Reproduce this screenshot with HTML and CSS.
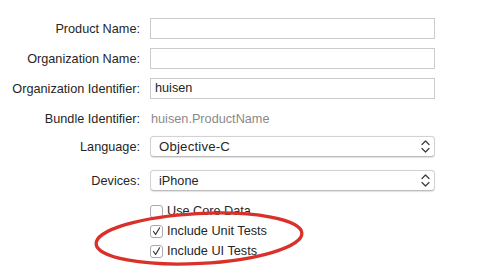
FILE: index.html
```html
<!DOCTYPE html>
<html lang="en">
  <head>
    <meta charset="utf-8" />
    <title>New Project Options</title>
    <link rel="stylesheet" href="styles.css">
  </head>
  <body>
    <div class="sheet">
      <div class="form">
        <div class="form-row">
          <div class="label">Product Name:</div>
          <div class="field"></div>
        </div>
        <div class="form-row">
          <div class="label">Organization Name:</div>
          <div class="field"></div>
        </div>
        <div class="form-row">
          <div class="label">Organization Identifier:</div>
          <div class="field">huisen</div>
        </div>
        <div class="form-row">
          <div class="label">Bundle Identifier:</div>
          <div class="static">huisen.ProductName</div>
        </div>
        <div class="form-row popup-row">
          <div class="label">Language:</div>
          <div class="popup">
            <span class="wide">Objective-C</span>
            <svg class="stepper" width="9" height="13" viewBox="0 0 9 13">
              <path d="M1 4.5 L4.5 1 L8 4.5 M1 8.5 L4.5 12 L8 8.5" />
            </svg>
          </div>
        </div>
        <div class="form-row popup-row gap-big">
          <div class="label">Devices:</div>
          <div class="popup">
            <span>iPhone</span>
            <svg class="stepper" width="9" height="13" viewBox="0 0 9 13">
              <path d="M1 4.5 L4.5 1 L8 4.5 M1 8.5 L4.5 12 L8 8.5" />
            </svg>
          </div>
        </div>
        <div class="checks">
          <div class="check-row">
            <span class="box"></span>
            <span>Use Core Data</span>
          </div>
          <div class="check-row">
            <span class="box">
              <svg width="11" height="11" viewBox="0 0 11 11"><path d="M2.5 5.5 L4.6 8.5 L8.6 1.8" /></svg>
            </span>
            <span>Include Unit Tests</span>
          </div>
          <div class="check-row">
            <span class="box">
              <svg width="11" height="11" viewBox="0 0 11 11"><path d="M2.5 5.5 L4.6 8.5 L8.6 1.8" /></svg>
            </span>
            <span>Include UI Tests</span>
          </div>
        </div>
      </div>
      <svg class="marker" width="482" height="275" viewBox="0 0 482 275">
        <ellipse cx="199" cy="238.5" rx="103" ry="25" transform="rotate(-3 199 238.5)" />
      </svg>
    </div>
  </body>
</html>
```

FILE: styles.css
```css
:root {
  --text-color: #262626;
  --muted-color: #8a8a8a;
  --border-color: #cbcbcb;
  --marker-color: #d9302a;
}

* {
  box-sizing: border-box;
}

body {
  margin: 0;
  background: #ffffff;
  font-family: "Liberation Sans", Arial, sans-serif;
  font-size: 12.7px;
  color: var(--text-color);
}

.sheet {
  position: relative;
  width: 482px;
  height: 275px;
  overflow: hidden;
}

.form {
  display: flex;
  flex-direction: column;
  gap: 9px;
  padding-top: 18px;
}

.form-row {
  display: flex;
  align-items: center;
  gap: 10px;
  height: 21px;
}

.label {
  width: 140px;
  text-align: right;
  white-space: nowrap;
}

.field {
  width: 285px;
  height: 21px;
  border: 1px solid var(--border-color);
  padding: 0 4px;
  line-height: 19px;
}

.static {
  color: var(--muted-color);
  padding-left: 1px;
}

.wide {
  font-size: 13.2px;
  letter-spacing: 0.2px;
}

.popup-row {
  margin-top: -2px;
}

.gap-big {
  margin-top: 4px;
}

.popup {
  width: 285px;
  height: 21px;
  display: flex;
  align-items: center;
  justify-content: space-between;
  padding: 0 4px 0 8px;
  border: 1px solid #d2d2d2;
  border-bottom-color: #bdbdbd;
  border-radius: 4px;
  box-shadow: 0 0.5px 1px rgba(0, 0, 0, 0.12);
  background: #ffffff;
}

.stepper path {
  fill: none;
  stroke: #3a3a3a;
  stroke-width: 1.2;
  stroke-linecap: round;
  stroke-linejoin: round;
}

.checks {
  display: flex;
  flex-direction: column;
  margin-top: 1px;
  padding-left: 150px;
}

.check-row {
  display: flex;
  align-items: center;
  gap: 4px;
  height: 20px;
}

.box {
  width: 13px;
  height: 13px;
  border: 1px solid #a9a9a9;
  border-radius: 3px;
  background: #ffffff;
  display: flex;
  align-items: center;
  justify-content: center;
}

.box path {
  fill: none;
  stroke: #333333;
  stroke-width: 1.2;
  stroke-linecap: round;
  stroke-linejoin: round;
}

.marker {
  position: absolute;
  left: 0;
  top: 0;
  pointer-events: none;
}

.marker ellipse {
  fill: none;
  stroke: var(--marker-color);
  stroke-width: 3.3;
}
```
